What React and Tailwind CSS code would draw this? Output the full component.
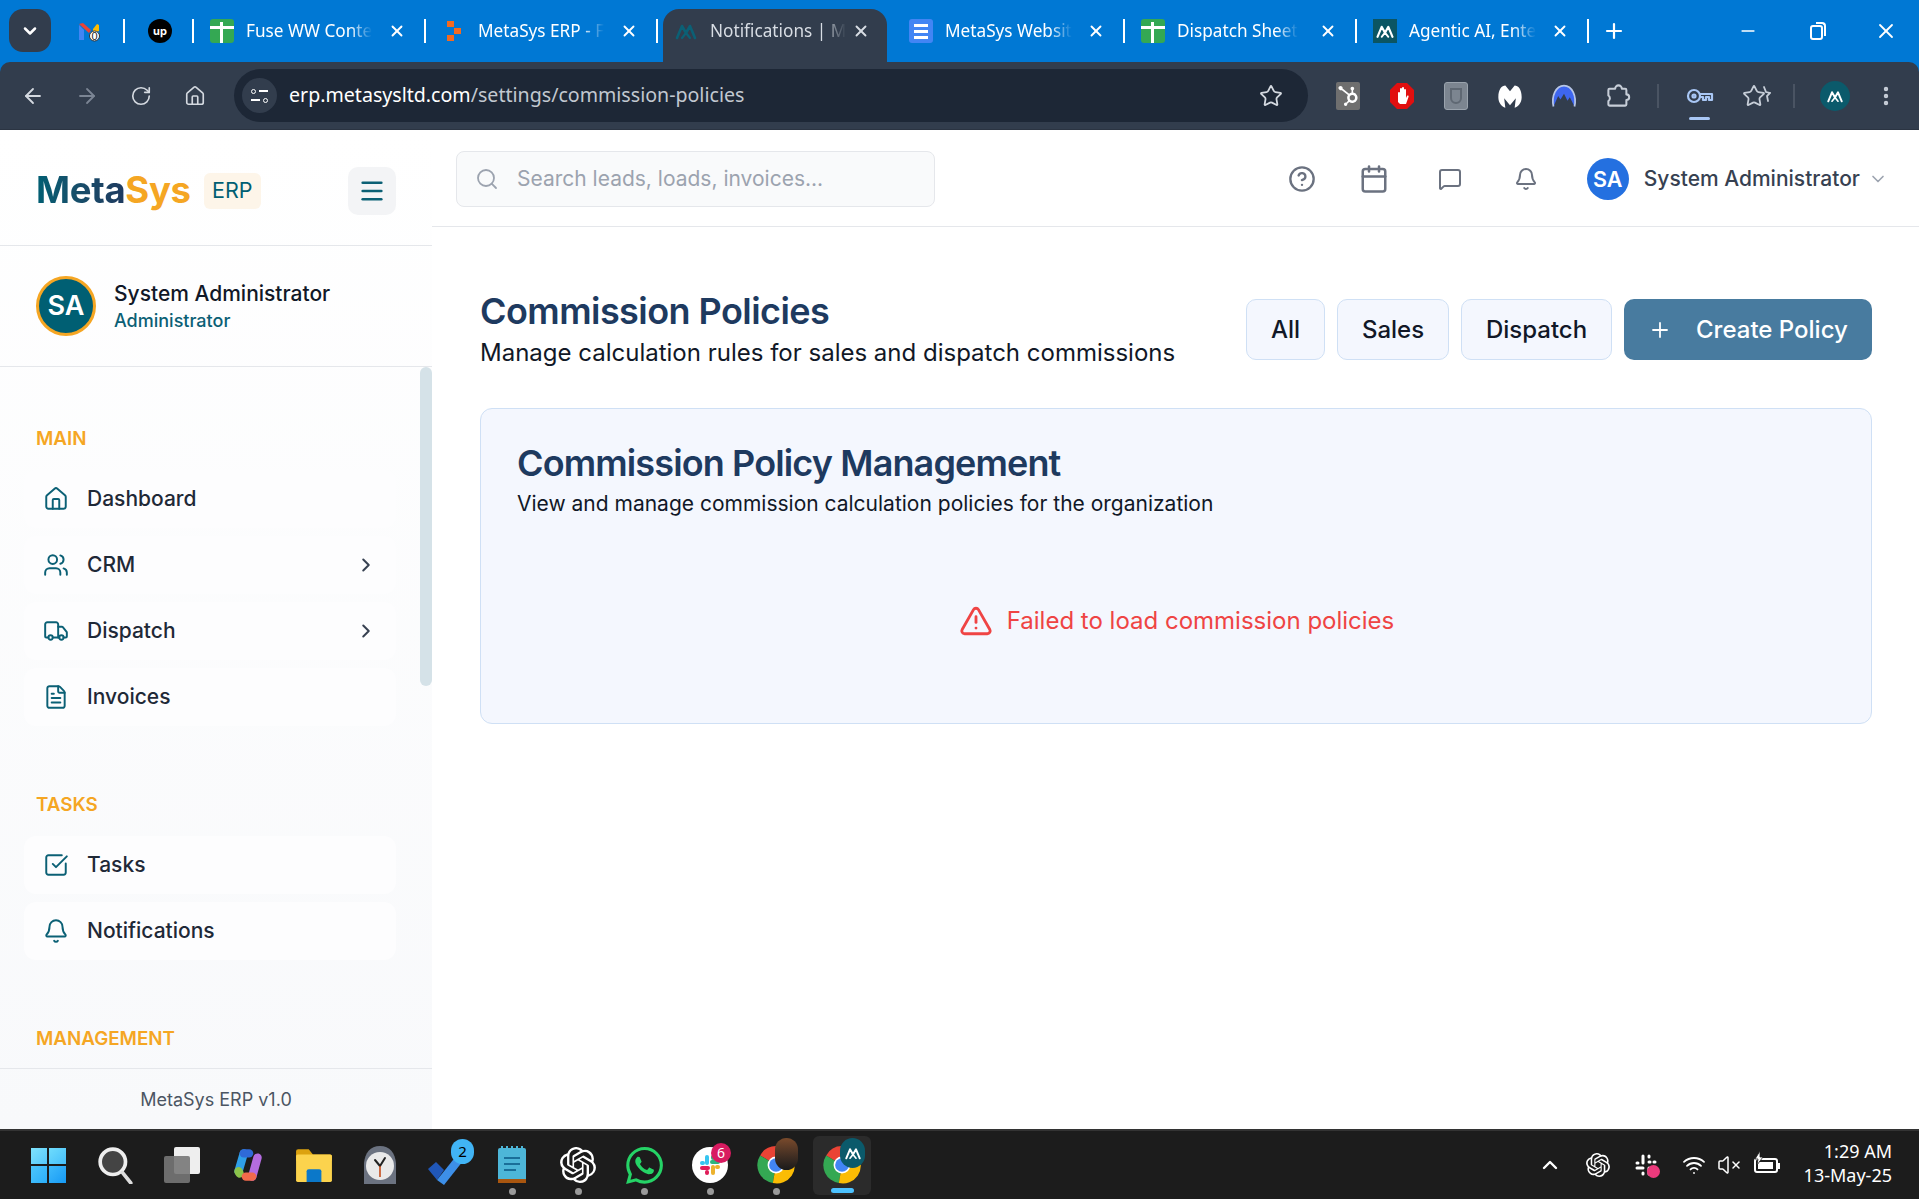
import React from 'react';
import {
  ArrowLeft, ArrowRight, RotateCw, Home, Star, X, Plus, Minus, ChevronDown, ChevronRight, ChevronUp,
  Search, CircleHelp, Calendar, MessageSquare, Bell, Menu, House, Users, Truck, FileText, SquareCheckBig,
  TriangleAlert, EllipsisVertical, Wifi, VolumeX,
} from 'lucide-react';
import { SiOpenai, SiWhatsapp, SiHubspot } from 'react-icons/si';

const inter = 'font-[Inter,sans-serif]';

const MetaMark = ({ className = 'w-5 h-5' }) => (
  <svg viewBox="0 0 24 24" className={className} fill="none" stroke="currentColor" strokeWidth="2.6" strokeLinejoin="round" strokeLinecap="round">
    <path d="M3 19 8 7l4 7 4-7 5 12" />
    <path d="M8 19l4-5 4 5" strokeWidth="2.2" />
  </svg>
);

const SheetIcon = () => (
  <div className="relative w-6 h-6 rounded-[3px] bg-[#34a853]">
    <div className="absolute left-[10px] top-[3px] bottom-0 w-[3px] bg-white" />
    <div className="absolute left-0 right-0 top-[7px] h-[3px] bg-white" />
  </div>
);

const DocIcon = () => (
  <div className="flex flex-col justify-center gap-[3px] w-6 h-6 px-[5px] rounded-[3px] bg-[#4285f4]">
    <div className="h-[3px] bg-white" />
    <div className="h-[3px] bg-white" />
    <div className="h-[3px] bg-white" />
  </div>
);

const GmailIcon = () => (
  <svg viewBox="0 0 24 24" className="w-6 h-6">
    <path d="M2 6v15h5V11z" fill="#4285f4" />
    <path d="M2 5l10 9 2-3-8-7z" fill="#ea4335" />
    <path d="M16 10l4-5 2 1v6l-6 2z" fill="#fbbc04" />
    <circle cx="17.500" cy="17" r="5" fill="#fff" stroke="#333" strokeWidth="1" />
    <text x="17.500" y="21" fontSize="11" fontFamily="Liberation Sans" textAnchor="middle" fill="#222">0</text>
  </svg>
);

const UpworkIcon = () => (
  <div className={`w-6 h-6 rounded-full bg-black text-white flex items-center justify-center text-[11px] font-bold ${inter}`}>up</div>
);

const OrangeIcon = () => (
  <svg viewBox="0 0 16 24" className="w-4 h-6">
    <rect x="1" y="2" width="7" height="6" fill="#f26a21" />
    <rect x="8" y="9" width="7" height="6" fill="#f26a21" />
    <rect x="1" y="16" width="7" height="6" fill="#f26a21" />
  </svg>
);

// tab titles are cut where the fade ends in the tab strip
const tabs = [
  { title: 'Fuse WW Conte', icon: <SheetIcon /> },
  { title: 'MetaSys ERP - F', icon: <OrangeIcon /> },
  { title: 'Notifications | M', icon: <MetaMark className="w-[30px] h-[30px] text-[#0b6075]" />, active: true },
  { title: 'MetaSys Websit', icon: <DocIcon /> },
  { title: 'Dispatch Sheet', icon: <SheetIcon /> },
  { title: 'Agentic AI, Ente', icon: <div className="w-6 h-6 bg-[#0b5563] text-white flex items-center justify-center"><MetaMark className="w-5 h-5" /></div> },
];

const fade = 'whitespace-nowrap text-[17.200px] leading-6 [mask-image:linear-gradient(to_right,black_82%,transparent_100%)]';

const Tab = ({ title, icon, active }) => {
  if (active) {
    return (
      <div className="flex items-start shrink-0 mt-[9px] ml-[5px] mr-[6px] h-[53px] w-[224px] pt-[10px] pl-[11px] pr-[17px] rounded-t-[16px] bg-[#323d4d]">
        <div className="w-6 h-6 flex items-center justify-center shrink-0">{icon}</div>
        <span className={`ml-3 text-[#d8dde4] ${fade}`}>{title}</span>
        <X className="ml-auto mt-[3px] w-[18px] h-[18px] text-[#d8dde4]" strokeWidth={2.5} />
      </div>
    );
  }
  return (
    <div className="flex items-center shrink-0 mt-[19px] h-[24px] w-[232px] pl-4 pr-[18px] border-r-2 border-white">
      <div className="w-6 flex justify-center shrink-0">{icon}</div>
      <span className={`ml-3 text-white ${fade}`}>{title}</span>
      <X className="ml-auto w-[18px] h-[18px] text-white" strokeWidth={2.5} />
    </div>
  );
};

const TabStrip = () => (
  <div className="flex items-start h-[62px] bg-[#0078d4] shrink-0 font-['Noto_Sans',sans-serif]">
    <div className="ml-[9px] mt-[9px] w-[42px] h-[43px] rounded-[14px] bg-[#323d4d] flex items-center justify-center">
      <ChevronDown className="w-5 h-5 text-white" strokeWidth={3} />
    </div>
    <div className="flex items-center mt-[19px] w-[74px] h-[24px] pl-[26px] border-r-2 border-white"><GmailIcon /></div>
    <div className="flex items-center mt-[19px] w-[69px] h-[24px] pl-[23px] border-r-2 border-white"><UpworkIcon /></div>
    {tabs.map((t) => <Tab key={t.title} {...t} />)}
    <Plus className="ml-[13px] mt-[19px] w-6 h-6 text-white" strokeWidth={2.2} />
    <div className="ml-auto mt-[19px] flex items-center text-white">
      <div className="w-[68px] flex justify-center"><Minus className="w-5 h-5" /></div>
      <div className="w-[71px] flex justify-center">
        <div className="relative w-[13px] h-[15px] -ml-[3px] mt-[3px] border-2 border-white rounded-[3px]">
          <div className="absolute -top-[5px] -right-[5px] w-[10px] h-[14px] border-t-2 border-r-2 border-white rounded-tr-[4px]" />
        </div>
      </div>
      <div className="w-[66px] flex justify-center"><X className="w-6 h-6" strokeWidth={1.8} /></div>
    </div>
  </div>
);

const Ext = ({ children }) => <div className="w-[54px] flex items-center justify-center shrink-0">{children}</div>;

const Toolbar = () => (
  <div className="flex items-center h-[68px] shrink-0 rounded-t-[10px] bg-[#323d4d] border-b border-[#2b3442] font-['Noto_Sans',sans-serif]">
    <div className="flex items-center ml-[6px] text-[#d4d9e0]">
      <div className="w-[54px] flex justify-center"><ArrowLeft className="w-6 h-6" strokeWidth={1.8} /></div>
      <div className="w-[54px] flex justify-center"><ArrowRight className="w-6 h-6 text-[#7b8594]" strokeWidth={1.8} /></div>
      <div className="w-[54px] flex justify-center"><RotateCw className="w-[22px] h-[22px]" strokeWidth={1.8} /></div>
      <div className="w-[54px] flex justify-center"><Home className="w-[22px] h-[22px]" strokeWidth={1.8} /></div>
    </div>
    <div className="flex items-center ml-[12px] w-[1074px] h-[53px] rounded-full bg-[#1d2736]">
      <div className="ml-[8px] w-[35px] h-[35px] rounded-full bg-[#323d4d] flex flex-col items-center justify-center gap-[4px]">
        <div className="flex items-center gap-[3px]"><div className="w-[5px] h-[5px] rounded-full border border-white" /><div className="w-[9px] h-[2px] bg-white" /></div>
        <div className="flex items-center gap-[3px]"><div className="w-[9px] h-[2px] bg-white" /><div className="w-[5px] h-[5px] rounded-full border border-white" /></div>
      </div>
      <div className="ml-[12px] -mt-[2px] text-[19.600px] leading-none text-white whitespace-nowrap">erp.metasysltd.com<span className="text-[#c2c8d0]">/settings/commission-policies</span></div>
      <Star className="ml-auto mr-[25px] w-6 h-6 text-[#d4d9e0]" strokeWidth={1.8} />
    </div>
    <div className="flex items-center ml-[13px]">
      <Ext><div className="w-6 h-7 bg-[#6f6f6f] rounded-[2px] flex items-center justify-center"><SiHubspot className="w-5 h-5 text-white" /></div></Ext>
      <Ext>
        <svg viewBox="0 0 24 28" className="w-6 h-7">
          <path d="M7 1h10l7 7v12l-7 7H7l-7-7V8z" fill="#e10f0f" />
          <path d="M8 20v-9a1 1 0 0 1 2 0V7a1 1 0 0 1 2 0V6a1 1 0 0 1 2 0v2a1 1 0 0 1 2 0v8l1-2c1-1 2 0 1.500 1L16 22h-6z" fill="#fff" />
        </svg>
      </Ext>
      <Ext><div className="w-6 h-7 rounded-[3px] bg-[#7c8590] border border-[#9aa3ad] flex items-center justify-center"><div className="w-3 h-4 border-2 border-[#5f6873] rounded-b-full" /></div></Ext>
      <Ext>
        <svg viewBox="0 0 24 24" className="w-7 h-7">
          <path d="M2 13C2 6 5 3 8 3l4 5 4-5c3 0 6 3 6 10 0 5-3 8-6 9l1-8-5 6-5-6 1 8c-3-1-6-4-6-9z" fill="#fff" />
        </svg>
      </Ext>
      <Ext>
        <svg viewBox="0 0 24 24" className="w-7 h-7">
          <path d="M3 21C1 12 5 3 12 3s11 9 9 18l-4-8-2 3-3-6-3 5-2-3z" fill="#3e66f0" />
          <path d="M3 21C1 12 5 3 12 3s11 9 9 18" fill="none" stroke="#b7c6e6" strokeWidth="1.500" />
        </svg>
      </Ext>
      <Ext>
        <svg viewBox="0 0 24 24" className="w-[27px] h-[27px]" fill="none" stroke="#c7ced8" strokeWidth="1.800" strokeLinejoin="round">
          <path d="M4 6h5a3 3 0 0 1 6 0h3a1 1 0 0 1 1 1v4a2.500 2.500 0 0 1 0 5v4a1 1 0 0 1-1 1H4a1 1 0 0 1-1-1v-3a3 3 0 0 0 0-5V7a1 1 0 0 1 1-1z" />
        </svg>
      </Ext>
      <div className="w-[2px] h-6 bg-[#4a5463] ml-[12px] mr-[14px]" />
      <div className="relative w-[54px] flex justify-center">
        <svg viewBox="0 0 28 24" className="w-[28px] h-[24px]" fill="none" stroke="#a9c7f5" strokeWidth="2.200" strokeLinejoin="round">
          <circle cx="8" cy="12" r="6" />
          <circle cx="8" cy="12" r="1.500" />
          <path d="M14 10h12v6h-3v-3h-3v3h-3v-3h-3" />
        </svg>
        <div className="absolute left-[16px] -bottom-[12px] w-[21px] h-[3px] rounded bg-[#a9c7f5]" />
      </div>
      <div className="relative w-6 h-6 ml-[15px]">
        <Star className="w-6 h-6 text-[#c7ced8]" strokeWidth={1.8} />
        <svg viewBox="0 0 8 24" className="absolute -right-[5px] top-0 w-2 h-6" fill="none" stroke="#c7ced8" strokeWidth="1.800" strokeLinecap="round">
          <path d="M1 3l2 5 4 1-3 3 1 5" />
        </svg>
      </div>
      <div className="w-[2px] h-6 bg-[#4a5463] ml-[27px]" />
      <div className="ml-[25px] w-[30px] h-[30px] rounded-full bg-[#0b5a6b] text-white flex items-center justify-center"><MetaMark className="w-[18px] h-[18px]" /></div>
      <EllipsisVertical className="ml-[24px] w-6 h-6 text-[#c7ced8]" strokeWidth={2.4} />
    </div>
  </div>
);

const NavItem = ({ icon: Icon, label, arrow }) => (
  <div className="flex items-center h-[58px] px-[19px] rounded-[12px] bg-[#fdfdfe]">
    <Icon className="w-[26px] h-[26px] text-[#0b6075]" strokeWidth={1.8} />
    <span className="ml-[18px] text-[21px] font-medium text-[#1f2937]">{label}</span>
    {arrow && <ChevronRight className="ml-auto w-[22px] h-[22px] text-[#374151]" strokeWidth={2.2} />}
  </div>
);

const SectionLabel = ({ children }) => (
  <div className="pl-[36px] h-6 mb-[19px] text-[18.800px] leading-6 font-semibold text-[#f5a623]">{children}</div>
);

const Sidebar = () => (
  <aside className="flex flex-col w-[432px] shrink-0 h-full bg-gradient-to-b from-white to-[#f8f9fb]">
    <div className="flex items-center h-[116px] pt-[6px] pl-[36px] pr-[36px] border-b border-[#e5e7eb] shrink-0">
      <div className="text-[36.500px] leading-none font-bold tracking-[-0.3px]">
        <span className="bg-gradient-to-r from-[#005f73] to-[#1e3a5f] bg-clip-text text-transparent">Meta</span>
        <span className="text-[#f5a623]">Sys</span>
      </div>
      <div className="ml-[13px] h-[36px] w-[57px] rounded-[6px] bg-[#fdf5e9] flex items-center justify-center text-[21.500px] text-[#005f73]">ERP</div>
      <div className="ml-auto w-12 h-12 rounded-[10px] bg-[#f3f4f6] flex items-center justify-center">
        <Menu className="w-7 h-7 text-[#0b6075]" strokeWidth={2.2} />
      </div>
    </div>
    <div className="flex items-center h-[121px] pl-[36px] border-b border-[#e5e7eb] shrink-0">
      <div className="w-[60px] h-[60px] rounded-full border-[3px] border-[#f5a623] bg-[#005f73] text-white flex items-center justify-center text-[27px] font-semibold">SA</div>
      <div className="ml-[18px] flex flex-col">
        <span className="text-[21px] leading-[29px] font-medium text-[#111827]">System Administrator</span>
        <span className="text-[18px] leading-[26px] font-medium text-[#0b6075]">Administrator</span>
      </div>
    </div>
    <nav className="relative flex-1 overflow-hidden pt-[60px]">
      <div className="absolute right-0 top-0 w-3 h-[319px] rounded-full bg-[#d5e2e8]" />
      <SectionLabel>MAIN</SectionLabel>
      <div className="flex flex-col gap-2 pl-6 pr-9 mb-[67px]">
        <NavItem icon={House} label="Dashboard" />
        <NavItem icon={Users} label="CRM" arrow />
        <NavItem icon={Truck} label="Dispatch" arrow />
        <NavItem icon={FileText} label="Invoices" />
      </div>
      <SectionLabel>TASKS</SectionLabel>
      <div className="flex flex-col gap-2 pl-6 pr-9 mb-[67px]">
        <NavItem icon={SquareCheckBig} label="Tasks" />
        <NavItem icon={Bell} label="Notifications" />
      </div>
      <SectionLabel>MANAGEMENT</SectionLabel>
    </nav>
    <div className="h-[61px] shrink-0 border-t border-[#e5e7eb] flex items-center justify-center text-[18px] text-[#4b5563]">MetaSys ERP v1.0</div>
  </aside>
);

const FilterButton = ({ children, className }) => (
  <button className={`h-[61px] rounded-[10px] border border-[#cfe0f5] bg-[#f4f7fe] text-[24px] font-medium text-[#111827] ${className}`}>{children}</button>
);

const TopBar = () => (
  <header className="flex items-center h-[97px] shrink-0 border-b border-[#e5e7eb] pt-[2px] pl-6 pr-[31px]">
    <div className="flex items-center w-[479px] h-[56px] rounded-[8px] border border-[#e5e7eb] bg-[#f9fafb] pl-[18px]">
      <Search className="w-[24px] h-[24px] text-[#9ca3af]" strokeWidth={1.8} />
      <input className="ml-[18px] flex-1 bg-transparent outline-none text-[21px] placeholder:text-[#9ca3af]" placeholder="Search leads, loads, invoices..." />
    </div>
    <div className="ml-auto flex items-center text-[#6b7280]">
      <CircleHelp className="w-7 h-7" strokeWidth={2} />
      <Calendar className="ml-[43px] w-[30px] h-[30px]" strokeWidth={2} />
      <MessageSquare className="ml-[49px] w-6 h-6" strokeWidth={2} />
      <Bell className="ml-[52px] w-6 h-6" strokeWidth={2} />
      <div className="ml-[49px] w-[42px] h-[42px] rounded-full bg-[#2470e0] text-white flex items-center justify-center text-[21.500px] font-semibold">SA</div>
      <span className="ml-[15px] text-[21px] font-medium text-[#374151]">System Administrator</span>
      <ChevronDown className="ml-[8px] w-5 h-5 text-[#9ca3af]" strokeWidth={2} />
    </div>
  </header>
);

const Main = () => (
  <main className="flex-1 flex flex-col min-w-0 bg-white">
    <TopBar />
    <div className="pt-[63px] pl-[48px] pr-[47px]">
      <div className="flex items-start justify-between mb-[35px]">
        <div>
          <h1 className="text-[36px] leading-[43px] font-semibold tracking-[-0.56px] text-[#1e3a5f]">Commission Policies</h1>
          <p className="text-[24px] leading-[40px] text-[#111827]">Manage calculation rules for sales and dispatch commissions</p>
        </div>
        <div className="flex items-center gap-3 mt-[9px]">
          <FilterButton className="w-[79px]">All</FilterButton>
          <FilterButton className="w-[112px]">Sales</FilterButton>
          <FilterButton className="w-[151px]">Dispatch</FilterButton>
          <button className="flex items-center h-[61px] w-[248px] pl-[24px] rounded-[10px] bg-[#487b9f] text-white text-[24px] font-medium">
            <Plus className="w-[24px] h-[24px]" strokeWidth={1.8} />
            <span className="ml-[24px]">Create Policy</span>
          </button>
        </div>
      </div>
      <section className="rounded-[12px] border border-[#cfe0f5] bg-[#f4f7fe] pt-[33px] px-[36px]">
        <h2 className="text-[36px] leading-[42px] font-semibold tracking-[-0.87px] text-[#1e3a5f]">Commission Policy Management</h2>
        <p className="mt-[4px] text-[21px] leading-[32px] text-[#111827]">View and manage commission calculation policies for the organization</p>
        <div className="flex items-center justify-center gap-[13px] pt-[84px] pb-[85px]">
          <TriangleAlert className="w-[36px] h-[34px] text-[#ef4444]" strokeWidth={2} />
          <span className="text-[24px] leading-[34px] text-[#ef4444]">Failed to load commission policies</span>
        </div>
      </section>
    </div>
  </main>
);

const ChromeIcon = ({ badge }) => (
  <div className="relative w-[38px] h-[38px]">
    <svg viewBox="0 0 36 36" className="w-[38px] h-[38px]">
      <path d="M18 18 3 9A17 17 0 0 1 33 9z" fill="#ea4335" />
      <path d="M18 18 3 9a17 17 0 0 0 12 26z" fill="#34a853" />
      <path d="M18 18 33 9a17 17 0 0 1-18 26z" fill="#fbbc04" />
      <circle cx="18" cy="18" r="8" fill="#fff" />
      <circle cx="18" cy="18" r="6.500" fill="#4285f4" />
    </svg>
    {badge}
  </div>
);

const SlackIcon = ({ dot }) => (
  <div className="relative w-9 h-9 rounded-full bg-white flex items-center justify-center">
    <svg viewBox="0 0 24 24" className="w-6 h-6" strokeWidth="4" strokeLinecap="round">
      <path d="M9 4v6" stroke="#36c5f0" /><path d="M4 10h1" stroke="#36c5f0" />
      <path d="M20 9h-6" stroke="#2eb67d" /><path d="M15 4v1" stroke="#2eb67d" />
      <path d="M15 20v-6" stroke="#ecb22e" /><path d="M20 14h-1" stroke="#ecb22e" />
      <path d="M4 15h6" stroke="#e01e5a" /><path d="M9 20v-1" stroke="#e01e5a" />
    </svg>
    {dot}
  </div>
);

const TaskIcon = ({ children, dot, active }) => (
  <div className={`relative flex items-center justify-center w-[58px] h-[59px] mx-1 rounded-[6px] ${active ? 'bg-[#2b2b2b]' : ''}`}>
    {children}
    {dot && <div className="absolute bottom-0 left-[26px] w-[7px] h-[7px] rounded-full bg-[#9a9a9a]" />}
    {active && <div className="absolute bottom-[2px] left-[18px] w-[23px] h-[5px] rounded-full bg-[#4cc2ff]" />}
  </div>
);

const Taskbar = () => (
  <div className="flex items-center h-[70px] shrink-0 bg-[#1c1c1c] border-t-2 border-[#333] pl-[17px] pr-[27px] font-['Noto_Sans',sans-serif]">
    <TaskIcon>
      <div className="grid grid-cols-2 gap-[2px] w-[35px] h-[35px] -translate-x-[2px]">
        <div className="bg-gradient-to-br from-[#7fe3fc] to-[#55c8fb]" />
        <div className="bg-gradient-to-br from-[#6fdcfc] to-[#45bffb]" />
        <div className="bg-gradient-to-br from-[#4cc6fb] to-[#2aaef9]" />
        <div className="bg-gradient-to-br from-[#3dbafb] to-[#149af5]" />
      </div>
    </TaskIcon>
    <TaskIcon>
      <svg viewBox="0 0 36 36" className="w-[38px] h-[38px]" fill="none">
        <circle cx="15" cy="15" r="12" fill="#444" stroke="#eee" strokeWidth="3.500" />
        <path d="M24 25l8 10" stroke="#ddd" strokeWidth="3.500" strokeLinecap="round" />
      </svg>
    </TaskIcon>
    <TaskIcon>
      <div className="relative w-9 h-9">
        <div className="absolute right-0 top-0 w-[26px] h-[27px] rounded-[2px] bg-[#eee]" />
        <div className="absolute left-0 bottom-0 w-[26px] h-[27px] rounded-[2px] bg-[#777]/90" />
      </div>
    </TaskIcon>
    <TaskIcon>
      <svg viewBox="0 0 36 36" className="w-[38px] h-[38px]" fill="none" strokeWidth="8" strokeLinecap="round">
        <path d="M14 7 9 24" stroke="#2f9fe8" />
        <path d="M9 24l1 2" stroke="#8bc34a" />
        <path d="M27 11l-5 18" stroke="#b46ce0" />
        <path d="M22 29h-6" stroke="#f26a4b" />
        <path d="M14 7h5" stroke="#2f6ad8" />
      </svg>
    </TaskIcon>
    <TaskIcon>
      <svg viewBox="0 0 36 36" className="w-[38px] h-[38px]">
        <path d="M1 5a2 2 0 0 1 2-2h10l4 5h16a2 2 0 0 1 2 2v4H1z" fill="#dca20f" />
        <rect x="1" y="8" width="34" height="26" rx="1.500" fill="#fcd34d" />
        <path d="M11 24a2 2 0 0 1 2-2h10a2 2 0 0 1 2 2v10H11z" fill="#0b78c9" />
      </svg>
    </TaskIcon>
    <TaskIcon>
      <svg viewBox="0 0 36 40" className="w-[36px] h-[40px]">
        <path d="M18 1C8 1 3 8 2 18v21h32V18C33 8 28 1 18 1z" fill="#6b7280" />
        <circle cx="18" cy="21" r="14" fill="#e9e9e9" />
        <path d="M18 21l-5-6M18 21l5-8" stroke="#222" strokeWidth="2" strokeLinecap="round" />
        <path d="M18 21v11" stroke="#c2410c" strokeWidth="1.500" />
      </svg>
    </TaskIcon>
    <TaskIcon>
      <svg viewBox="0 0 40 40" className="w-[40px] h-[40px]">
        <path d="M2 24l8-7 8 8-7 10z" fill="#2057b8" />
        <path d="M11 35 31 10l6 6-19 24z" fill="#3d8fe8" />
      </svg>
      <div className="absolute top-[3px] right-[1px] w-[23px] h-[25px] rounded-full bg-[#41b4f5] flex items-center justify-center text-[15px] leading-none text-black">2</div>
    </TaskIcon>
    <TaskIcon dot>
      <svg viewBox="0 0 30 38" className="w-[30px] h-[38px]">
        <rect x="1" y="2" width="28" height="34" rx="2" fill="#4db6d8" />
        <rect x="1" y="33" width="28" height="4" fill="#a9560f" />
        <path d="M5 0v4M10 0v4M15 0v4M20 0v4M25 0v4" stroke="#4db6d8" strokeWidth="2" />
        <path d="M7 12h16M7 18h16M7 24h12" stroke="#1a6f99" strokeWidth="2" />
      </svg>
    </TaskIcon>
    <TaskIcon dot><SiOpenai className="w-[36px] h-[36px] text-white" /></TaskIcon>
    <TaskIcon dot><SiWhatsapp className="w-[37px] h-[37px] text-[#25d366]" /></TaskIcon>
    <TaskIcon dot>
      <SlackIcon dot={<div className="absolute -top-[4px] -right-[3px] w-[20px] h-[20px] rounded-full bg-[#d81b60] flex items-center justify-center text-[14px] leading-none text-white">6</div>} />
    </TaskIcon>
    <TaskIcon dot>
      <ChromeIcon badge={<div className="absolute -top-[8px] -right-[3px] w-[23px] h-[32px] rounded-full bg-gradient-to-b from-[#7a4a2b] to-[#1a1a1a]" />} />
    </TaskIcon>
    <TaskIcon active>
      <ChromeIcon badge={<div className="absolute -top-[8px] -right-[4px] w-[25px] h-[30px] rounded-full bg-[#0b5a6b] flex items-center justify-center text-white"><MetaMark className="w-[18px] h-[18px]" /></div>} />
    </TaskIcon>

    <div className="ml-auto flex items-center text-white">
      <ChevronUp className="w-6 h-6" strokeWidth={2.4} />
      <SiOpenai className="ml-[24px] w-6 h-6" />
      <div className="ml-[24px] relative w-6 h-6">
        <svg viewBox="0 0 24 24" className="w-6 h-6" stroke="#fff" strokeWidth="3" strokeLinecap="round">
          <path d="M9 3v7M15 3v1M3 10h1M20 9h1M15 9h1M15 15v6M3 15h6M9 20v1" />
        </svg>
        <div className="absolute right-[-2px] bottom-[-1px] w-[13px] h-[13px] rounded-full bg-[#ec3a7c]" />
      </div>
      <Wifi className="ml-[24px] w-6 h-6" strokeWidth={1.8} />
      <VolumeX className="ml-[11px] w-6 h-6" strokeWidth={1.500} />
      <div className="ml-[13px] relative w-[24px] h-[15px] border-2 border-white rounded-[3px]">
        <div className="absolute inset-[2px] right-[3px] bg-white" />
        <div className="absolute -right-[4px] top-[3px] w-[2px] h-[6px] bg-white" />
        <svg viewBox="0 0 10 14" className="absolute -left-[2px] -top-[9px] w-[10px] h-[14px]">
          <path d="M6 0 1 8h3l-1 6 6-8H6z" fill="#fff" stroke="#1c1c1c" strokeWidth="0.8" />
        </svg>
      </div>
      <div className="ml-[26px] -mt-[4px] flex flex-col items-end text-[18px] leading-[24px] text-white">
        <span>1:29 AM</span>
        <span>13-May-25</span>
      </div>
    </div>
  </div>
);

const App = () => (
  <div className="flex flex-col w-[1919px] h-[1199px] overflow-hidden bg-[#0078d4]">
    <TabStrip />
    <Toolbar />
    <div className={`flex flex-1 min-h-0 bg-white ${inter}`}>
      <Sidebar />
      <Main />
    </div>
    <Taskbar />
  </div>
);

export default App;
